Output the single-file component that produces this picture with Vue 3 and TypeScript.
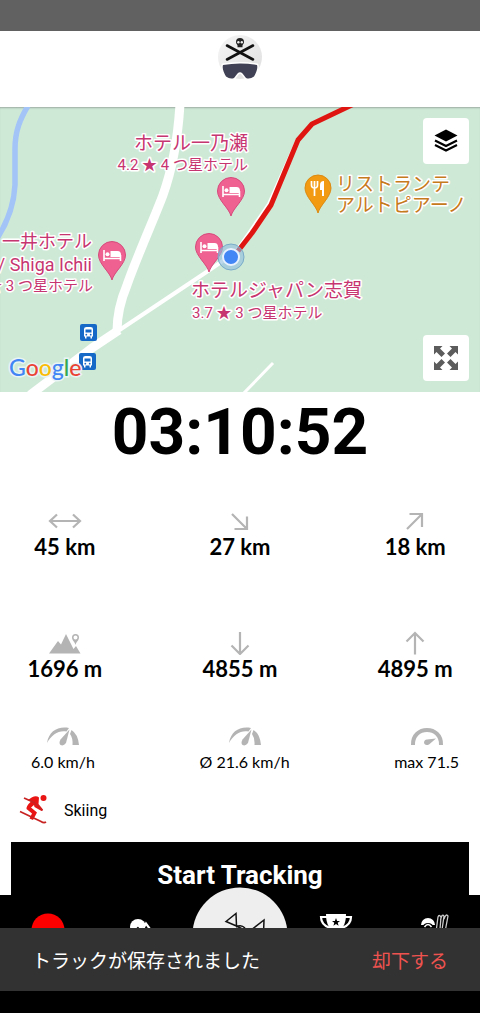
<script setup lang="ts">
import { ref } from 'vue'

interface Stat {
  icon: string
  value: string
}

const distances: Stat[] = [
  { icon: 'width', value: '45 km' },
  { icon: 'downhill', value: '27 km' },
  { icon: 'uphill', value: '18 km' },
]
const altitudes: Stat[] = [
  { icon: 'mountain', value: '1696 m' },
  { icon: 'down', value: '4855 m' },
  { icon: 'up', value: '4895 m' },
]
const speeds: Stat[] = [
  { icon: 'gauge', value: '6.0 km/h' },
  { icon: 'gauge', value: 'Ø 21.6 km/h' },
  { icon: 'max', value: 'max 71.5' },
]
const hotelPins = [
  { x: 231, y: 84 },
  { x: 209, y: 140 },
  { x: 112, y: 148 },
]
const busStops = [
  { x: 80, y: 217 },
  { x: 79, y: 246 },
]
const strokes: Record<string, string> = {
  width: 'M2 12H32M9 5.500L2 12L9 18.500M25 5.500L32 12L25 18.500',
  downhill: 'M9 5L24 20M24 7.500V20H11.500',
  uphill: 'M9 20L24 5M11.500 5H24V18',
  down: 'M17 1V23M8.500 14.500L17 23L25.500 14.500',
  up: 'M17 23.500V2M8.500 10.500L17 2L25.500 10.500',
}
const showSnackbar = ref(true)
</script>

<template>
  <div class="page">
    <div class="status"></div>
    <header class="header">
      <svg class="logo" width="46" height="50" viewBox="0 0 46 50" aria-hidden="true">
        <defs>
          <linearGradient id="disc" x1="0" y1="0" x2="1" y2="1">
            <stop offset="0" stop-color="#f6f6f6" />
            <stop offset="1" stop-color="#dedede" />
          </linearGradient>
        </defs>
        <circle cx="23" cy="24" r="22" fill="url(#disc)" />
        <path d="M10 12.500L36 26.500M36 12.500L10 26.500" stroke="#111" stroke-width="2.600" stroke-linecap="round" />
        <path d="M19 9a4 4 0 0 1 8 0c0 2-1.300 2.400-1.500 3.500v1.800h-5v-1.800c-.2-1.100-1.500-1.500-1.500-3.500z" fill="#222" />
        <circle cx="21.400" cy="9.300" r="1.200" fill="#eee" /><circle cx="24.800" cy="9.300" r="1.200" fill="#eee" />
        <path d="M6 32q17-3 34 0c1 3.500-.5 7-3 11.500q-4 3-8 1.500l-3.500-4.500q-2.500-2.500-5 0L17 45q-4 1.500-8-1.500C6.500 39 5 35.500 6 32z" fill="#414155" stroke="#fff" stroke-width="3" paint-order="stroke" />
      </svg>
    </header>

    <section class="map">
      <svg class="map-canvas" viewBox="0 0 480 285" preserveAspectRatio="xMidYMid slice">
        <path d="M29-3C20 12 15 24 15 42V78C14 98 8 114-2 130" fill="none" stroke="#a3c4f7" stroke-width="5.500" />
        <path d="M180-3C178 30 173 60 163 88C156 107 136 152 127 178Q117 202 117 224" fill="none" stroke="#fff" stroke-width="9" />
        <path d="M119 223L92 241L30 288" fill="none" stroke="#fff" stroke-width="9" stroke-linejoin="round" />
        <path d="M118 224L205 166L236 145L250 125L269 97L298 32" fill="none" stroke="#fff" stroke-width="4" />
        <path d="M243 287L273 256" stroke="#fff" stroke-width="3" />
        <path d="M238 144L252 126L271 98L298 33L312 17L356-4" fill="none" stroke="#df1512" stroke-width="5" stroke-linejoin="round" />

        <g v-for="pin in hotelPins" :key="pin.x" :transform="`translate(${pin.x} ${pin.y})`">
          <path d="M0 25C-2 17-13.500 9-13.500 0A13.500 13.500 0 0 1 13.500 0C13.500 9 2 17 0 25z" fill="#ee6190" stroke="#d64a7c" />
          <path d="M-8-5V6M-8 3.500H8.500M8.500 0V6" stroke="#fff" stroke-width="1.600" fill="none" />
          <circle cx="-4.500" cy="-.8" r="2" fill="#fff" />
          <path d="M-1.500-4H5.500Q9-4 9 0V2H-1.500z" fill="#fff" />
        </g>
        <g transform="translate(318 81)">
          <path d="M0 25C-2 17-13 9-13 0A13 13 0 0 1 13 0C13 9 2 17 0 25z" fill="#f19a12" stroke="#dc8a10" />
          <path d="M-6.500-7V-3Q-6.500 0-3.500 0T-.5-3V-7M-3.500-7V8" stroke="#fff" stroke-width="1.700" fill="none" />
          <path d="M6 8H4V2H2V-3Q2-7 6-7z" fill="#fff" />
        </g>
        <g v-for="stop in busStops" :key="stop.y" :transform="`translate(${stop.x} ${stop.y})`">
          <rect width="17" height="17" rx="2" fill="#1769c8" />
          <path d="M4 5Q4 3 6.500 3H10.500Q13 3 13 5V12.500H12V14.500H10.500V12.500H6.500V14.500H5V12.500H4z" fill="#fff" />
          <path d="M5.500 5.500H11.500V8.500H5.500z" fill="#1769c8" />
          <circle cx="6.300" cy="10.700" r=".9" fill="#1769c8" /><circle cx="10.700" cy="10.700" r=".9" fill="#1769c8" />
        </g>
        <circle cx="231" cy="150" r="13" fill="#8dbddd" fill-opacity=".6" stroke="#79abc9" />
        <circle cx="231" cy="150" r="8" fill="#4285f4" stroke="#e8f1ff" stroke-width="2" />

        <g class="place hotel">
          <text class="name" x="248" y="43" text-anchor="end">ホテル一乃瀬</text>
          <text class="detail" x="248" y="63" text-anchor="end">4.2 ★ 4 つ星ホテル</text>
          <text class="name small" x="92" y="141" text-anchor="end">一井ホテル</text>
          <text class="name small" x="92" y="164" text-anchor="end">/ Shiga Ichii</text>
          <text class="detail" x="93" y="184" text-anchor="end">★ 3 つ星ホテル</text>
          <text class="name" x="191" y="190">ホテルジャパン志賀</text>
          <text class="detail" x="192" y="211">3.7 ★ 3 つ星ホテル</text>
        </g>
        <g class="place food">
          <text class="name" x="336" y="84">リストランテ</text>
          <text class="name" x="336" y="105">アルトピアーノ</text>
        </g>
        <text class="google" x="9" y="269"><tspan fill="#4285f4">G</tspan><tspan fill="#ea4335">o</tspan><tspan fill="#fbbc05">o</tspan><tspan fill="#4285f4">g</tspan><tspan fill="#34a853">l</tspan><tspan fill="#ea4335">e</tspan></text>
      </svg>
      <button class="map-button layers" type="button" aria-label="Map layers">
        <svg width="24" height="24" viewBox="0 0 24 24">
          <path d="M12 .5L23.500 6.500L12 12.500L.5 6.500z" />
          <path d="M1 11.500L12 17L23 11.500M1 16L12 21.500L23 16" fill="none" stroke="#000" stroke-width="2.200" />
        </svg>
      </button>
      <button class="map-button fullscreen" type="button" aria-label="Fullscreen">
        <svg width="26" height="26" viewBox="0 0 26 26" fill="#5c5c5c">
          <path id="corner" d="M1 1H9.500L7 3.500L12 8.500L8.500 12L3.500 7L1 9.500z" />
          <use href="#corner" transform="rotate(90 13 13)" />
          <use href="#corner" transform="rotate(180 13 13)" />
          <use href="#corner" transform="rotate(270 13 13)" />
        </svg>
      </button>
    </section>

    <main class="tracker">
      <div class="timer">03:10:52</div>
      <div v-for="(row, i) in [distances, altitudes]" :key="i" class="stats">
        <div v-for="stat in row" :key="stat.value" class="stat">
          <svg width="34" height="24" viewBox="0 0 34 24" aria-hidden="true">
            <g v-if="stat.icon === 'mountain'" fill="#b5b4b4">
              <path d="M1 22.500L10 10L13 13.500L18 3L25.500 18L28 15L32.500 22.500z" />
              <path d="M27.500 14C27 11 24 9.500 24 6.500a3.500 3.500 0 0 1 7 0C31 9.500 28 11 27.500 14zM27.500 4.500a2 2 0 1 0 0 4a2 2 0 0 0 0-4z" fill-rule="evenodd" />
            </g>
            <path v-else :d="strokes[stat.icon]" fill="none" stroke="#b5b4b4" stroke-width="2.200" />
          </svg>
          <strong>{{ stat.value }}</strong>
        </div>
      </div>
      <div class="speeds">
        <div v-for="stat in speeds" :key="stat.value" class="stat">
          <svg width="34" height="24" viewBox="0 0 34 24" fill="#b5b4b4" aria-hidden="true">
            <template v-if="stat.icon === 'gauge'">
              <path d="M1 18C3 6 12 1 23 3L20.500 6.500C13 5 6 9 1 18z" />
              <path d="M23.500 4.500L20 18Q17.500 21.500 14.500 20Q12.500 18 14.500 14.500z" />
              <path d="M25.500 5Q32 9 33 20H26.500Q27 13 24 9z" />
            </template>
            <template v-else>
              <path d="M3 20C2 0 32 0 31 20" fill="none" stroke="#b5b4b4" stroke-width="4" />
              <path d="M26 13.500L19 19.500Q15 21 14 18Q14 14.500 17 14.500z" />
            </template>
          </svg>
          <span>{{ stat.value }}</span>
        </div>
      </div>
      <div class="sport">
        <svg width="30" height="32" viewBox="0 0 30 32" aria-hidden="true">
          <circle cx="24.500" cy="4" r="3" fill="#e91515" />
          <path d="M9 6Q16 0 20 3.500L19.500 10L24 15.500L22.500 17L15.500 13L15 11L12 13.500L18 18.500L14 26L10.500 24.500L13 19.500L7.500 15Q7 12 12 7.500z" fill="#e91515" />
          <path d="M5 4L15 8.500L23.500 16.500M1 17.500L22 27.500Q25 29.500 27 28" fill="none" stroke="#c82323" stroke-width="1.700" />
        </svg>
        <span>Skiing</span>
      </div>
      <button class="start" type="button">Start Tracking</button>
    </main>

    <nav class="nav">
      <a href="#record" aria-label="Record"><svg width="36" height="36" viewBox="0 0 36 36"><circle cx="18" cy="18" r="16.500" fill="#f00" /></svg></a>
      <a href="#resorts" aria-label="Resorts">
        <svg width="36" height="36" viewBox="0 0 36 36"><circle cx="12" cy="15" r="8" fill="#fff" /><path d="M5 22L12 12.500L16 17L20 11L32 26H5z" /><path d="M7 18L12 13L16.500 18L20 11.500L29 24" fill="none" stroke="#fff" stroke-width="2.200" /></svg>
      </a>
      <a class="home" href="#home" aria-label="Home">
        <svg width="96" height="96" viewBox="0 0 96 96">
          <circle cx="48" cy="48" r="47.500" fill="#eee" />
          <path d="M34 34.500L44 26.500L44.500 39zM59 43L72 33L71.500 47M44 40Q49 37 53 41M44.500 39L60 47M59 43L66 47" fill="none" stroke="#111" stroke-width="1.500" />
        </svg>
      </a>
      <a href="#awards" aria-label="Awards">
        <svg width="36" height="36" viewBox="0 0 36 36"><path d="M8 2H28Q28 17 18 20Q8 17 8 2z" fill="#fff" /><path d="M10 5H3Q3 13 12 16M26 5H33Q33 13 24 16" fill="none" stroke="#fff" stroke-width="2.200" /><path d="M18 6L19.100 9H22L19.700 10.800L20.600 13.700L18 12L15.400 13.700L16.300 10.800L14 9H16.900z" fill="#000" /></svg>
      </a>
      <a href="#friends" aria-label="Friends">
        <svg width="36" height="36" viewBox="0 0 36 36"><path d="M8 13a6 6 0 0 1 12 0" fill="#fff" stroke="#fff" stroke-width="2" /><ellipse cx="14" cy="14" rx="5" ry="3" /><path d="M10.500 15Q14 10 17.500 15" fill="none" stroke="#fff" stroke-width="1.500" /><path d="M22 20L24 5Q25 2 27 5L26 17M26.500 8Q28 1 30 4L28 18M30 7Q32 1 34 4L31 20" fill="none" stroke="#ccc" stroke-width="1.300" /></svg>
      </a>
    </nav>

    <div v-if="showSnackbar" class="snackbar" role="status">
      <span>トラックが保存されました</span>
      <button type="button" @click="showSnackbar = false">却下する</button>
    </div>
  </div>
</template>

<style>
body {
  margin: 0;
  background: #fff;
}
</style>

<style scoped>
.page {
  display: flex;
  flex-direction: column;
  min-height: 100vh;
  color: #000;
  font-family: Roboto, "Noto Sans CJK JP", sans-serif;
}
button {
  padding: 0;
  border: 0;
  font-family: inherit;
  cursor: pointer;
}
svg {
  display: block;
}
.status {
  height: 31px;
  background: #616161;
}
.header {
  display: flex;
  justify-content: center;
  height: 74px;
  padding-top: 2px;
  background: #fff;
}
.map {
  position: relative;
  height: 285px;
  background: #cfe9d7;
  box-shadow: inset 0 2px 2px -1px #9bac9f;
}
.map-canvas {
  width: 100%;
  height: 100%;
}
.place text {
  paint-order: stroke;
  stroke: #fff;
  stroke-width: 3px;
  stroke-linejoin: round;
}
.hotel {
  fill: #c73570;
}
.food {
  fill: #c77a1c;
}
.name {
  font-size: 19px;
}
.name.small {
  font-size: 18px;
}
.detail {
  font-size: 15px;
}
.google {
  font: 500 23px Lato, sans-serif;
  paint-order: stroke;
  stroke: #e9f4f4;
  stroke-width: 3px;
}
.map-button {
  position: absolute;
  right: 11px;
  display: grid;
  place-items: center;
  width: 46px;
  height: 46px;
  border-radius: 4px;
  background: #fff;
}
.layers {
  top: 11px;
}
.fullscreen {
  bottom: 11px;
}
.timer {
  margin-bottom: 35px;
  font-size: 64px;
  font-weight: 700;
  line-height: 82px;
  text-align: center;
}
.stats {
  display: grid;
  grid-template-columns: 27% 1fr 27%;
  margin-bottom: 70px;
}
.stats + .stats {
  margin-bottom: 42px;
}
.stat {
  display: flex;
  flex-direction: column;
  align-items: center;
  font-family: Lato, sans-serif;
  font-size: 16px;
  line-height: 26px;
  white-space: nowrap;
}
.stat strong {
  font-size: 22px;
  font-weight: 700;
  line-height: 28px;
}
.speeds {
  display: flex;
  justify-content: space-between;
  padding: 0 21px 0 31px;
}
.sport {
  display: flex;
  align-items: center;
  gap: 15px;
  height: 40px;
  margin: 15px 0 12px;
  padding-left: 19px;
  font-size: 16px;
}
.start {
  display: block;
  width: calc(100% - 22px);
  height: 66px;
  margin: 0 11px -13px;
  background: #000;
  color: #fff;
  font-size: 26px;
  font-weight: 700;
}
.nav {
  display: grid;
  flex: 1;
  grid-template-columns: repeat(5, 1fr);
  justify-items: center;
  align-items: start;
  min-height: 118px;
  background: #000;
}
.nav a {
  margin-top: 17px;
}
.nav .home {
  margin-top: -8px;
}
.snackbar {
  position: fixed;
  right: 0;
  bottom: 22px;
  left: 0;
  display: flex;
  align-items: center;
  justify-content: space-between;
  height: 63px;
  padding: 0 32px;
  background: #323232;
  color: #fff;
  font-size: 19px;
}
.snackbar button {
  background: none;
  color: #ef5350;
  font-size: 19px;
}
</style>
